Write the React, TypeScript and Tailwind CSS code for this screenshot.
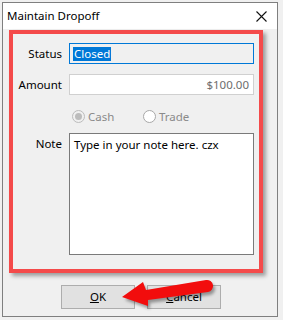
import React from "react";

const font = { fontFamily: '"Segoe UI", "Noto Sans", "Open Sans", sans-serif' };

function Radio({ label, checked }: { label: string; checked?: boolean }) {
  return (
    <div className="flex items-center gap-[3px]">
      <span
        className={`flex h-[13px] w-[13px] items-center justify-center rounded-full border ${
          checked ? "border-[#bcbcbc] bg-[#f0f0f0]" : "border-[#a8a8a8] bg-white"
        }`}
      >
        {checked && <span className="h-[7px] w-[7px] rounded-full bg-[#bcbcbc]" />}
      </span>
      <span className="text-[#8a8a8a]">{label}</span>
    </div>
  );
}

export default function App() {
  return (
    <div className="relative h-[320px] w-[283px] overflow-hidden bg-[#f0f0f0] text-[11.5px] text-black" style={font}>
      <div className="ml-[2px] mt-[2px] h-[315px] w-[276px] border border-[#7f7f7f] bg-[#f0f0f0]">
        {/* title bar */}
        <div className="flex h-[26px] items-center justify-between bg-white pl-[4px] pr-[10px]">
          <span className="text-[11.5px] leading-none">Maintain Dropoff</span>
          <svg width="11" height="11" viewBox="0 0 11 11">
            <path d="M0.5 0.5 L10.5 10.5 M10.5 0.5 L0.5 10.5" stroke="#111" strokeWidth="1.1" />
          </svg>
        </div>

        {/* highlighted form */}
        <div className="ml-[6px] mt-[1px] h-[243px] w-[254px] border-4 border-[#f44a4a] shadow-[3px_3px_4px_rgba(0,0,0,0.35)]">
          <div className="grid grid-cols-[49px_185px] items-center gap-x-[7px] pt-[9px]">
            <span className="text-right">Status</span>
            <div className="flex h-[21px] items-center border border-[#0078d7] bg-[#f0f0f0] pl-[3px]">
              <span className="bg-[#0078d7] px-[1px] leading-[14px] text-white">Closed</span>
            </div>

            <span className="mt-[10px] text-right">Amount</span>
            <div className="mt-[10px] flex h-[21px] items-center justify-end border border-[#d0d0d0] bg-white pr-[4px] text-[#6d6d6d]">
              $100.00
            </div>

            <span />
            <div className="mt-[13px] grid h-[14px] grid-cols-[71px_auto] items-center pl-[3px]">
              <Radio label="Cash" checked />
              <Radio label="Trade" />
            </div>

            <span className="mt-[11px] self-start pt-[2px] text-right">Note</span>
            <div className="mt-[11px] h-[122px] border border-[#7a7a7a] bg-white px-[4px] pt-[2px]">
              Type in your note here. czx
            </div>
          </div>
        </div>

        {/* buttons */}
        <div className="mt-[12px] flex gap-[12px] pl-[58px]">
          <button className="flex h-[24px] w-[74px] items-center justify-center border border-[#adadad] bg-[#e1e1e1]">
            <span><span className="underline">O</span>K</span>
          </button>
          <button className="flex h-[24px] w-[74px] items-center justify-center border border-[#adadad] bg-[#e1e1e1]">
            <span><span className="underline">C</span>ancel</span>
          </button>
        </div>
      </div>

      {/* red arrow annotation */}
      <svg className="pointer-events-none absolute left-0 top-0" width="283" height="320" viewBox="0 0 283 320">
        <defs>
          <filter id="sh" x="-20%" y="-50%" width="140%" height="200%">
            <feGaussianBlur stdDeviation="1.6" />
          </filter>
        </defs>
        <path
          d="M125 300 L145 285 L148 293 L208 283 A6 6 0 0 1 210 295 L150 303 L150 309 Z"
          fill="rgba(0,0,0,0.35)"
          filter="url(#sh)"
        />
        <path
          d="M122 297 L143 282 L146 290 L206 280 A6 6 0 0 1 208 292 L148 300 L148 306 Z"
          fill="#f20d0d"
        />
      </svg>
    </div>
  );
}
